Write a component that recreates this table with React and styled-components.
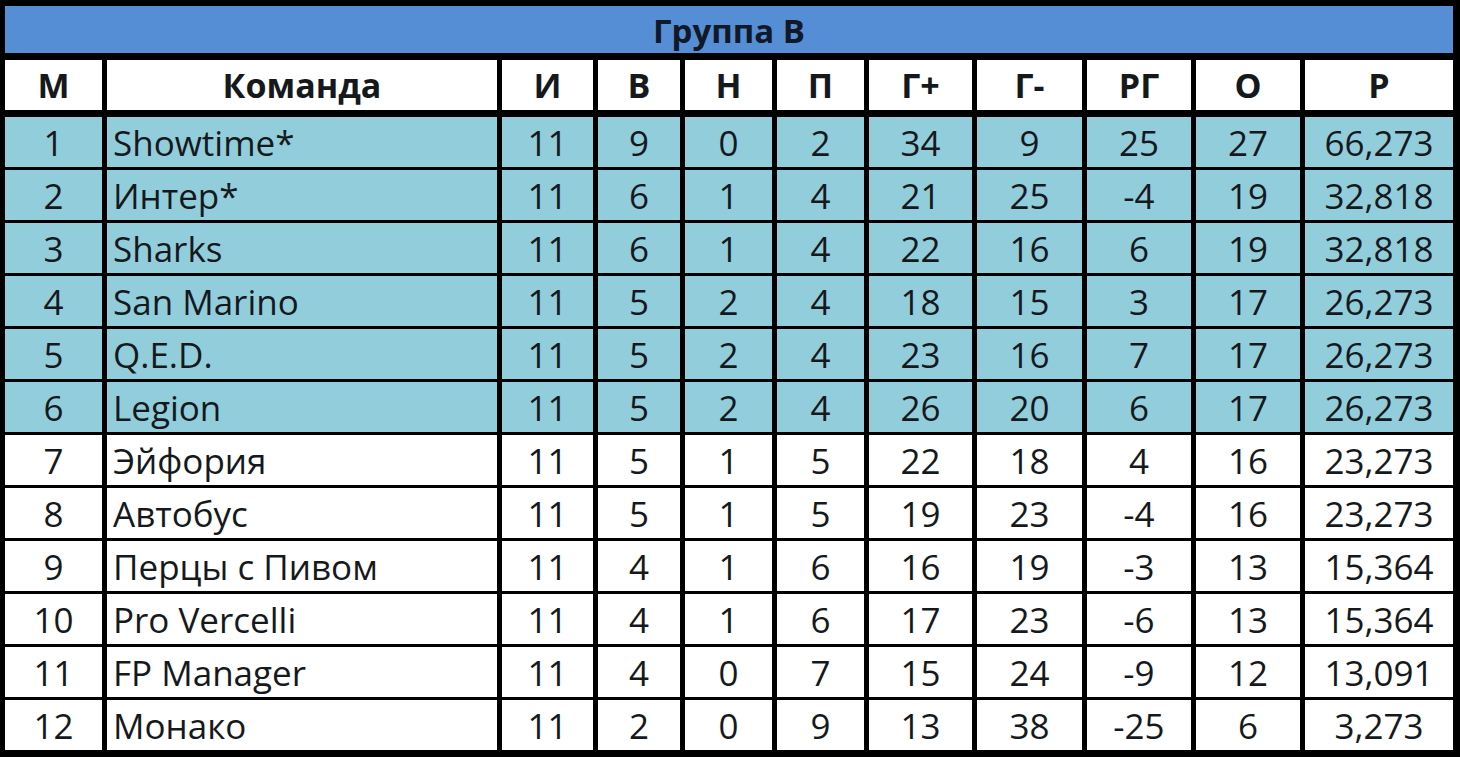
import styled, { createGlobalStyle } from "styled-components"

const GlobalStyle = createGlobalStyle`
    html, body {
        margin: 0;
        padding: 0;
        background: #ffffff;
    }
`

const columns = "97px 390px 91px 82px 87px 87px 103px 105px 104px 104px 148px"

const Board = styled.div`
    width: 1460px;
    height: 757px;
    box-sizing: border-box;
    background: #000;
    padding: 6px 7px 7px 5px;
    display: flex;
    flex-direction: column;
    font-family: "Open Sans", "Liberation Sans", sans-serif;
    color: #16191c;
`

const Title = styled.div`
    height: 47px;
    background: #558ed5;
    display: flex;
    align-items: center;
    justify-content: center;
    padding-top: 2px;
    box-sizing: border-box;
    font-size: 33px;
    font-weight: 700;
    color: #111827;
`

const Row = styled.div`
    display: grid;
    grid-template-columns: ${columns};
    column-gap: 5px;
    height: 50px;
    margin-top: ${props => props.$gap}px;
`

const Cell = styled.div`
    background: ${props => props.$bg};
    display: flex;
    align-items: center;
    justify-content: ${props => props.$left ? "flex-start" : "center"};
    padding-left: ${props => props.$left ? "6px" : "0"};
    font-size: ${props => props.$head ? "34px" : "35px"};
    font-weight: ${props => props.$head ? 700 : 400};
    white-space: nowrap;
    overflow: hidden;
`

const headers = ["М", "Команда", "И", "В", "Н", "П", "Г+", "Г-", "РГ", "О", "Р"]

const rows = [
    [1, "Showtime*", 11, 9, 0, 2, 34, 9, 25, 27, "66,273"],
    [2, "Интер*", 11, 6, 1, 4, 21, 25, -4, 19, "32,818"],
    [3, "Sharks", 11, 6, 1, 4, 22, 16, 6, 19, "32,818"],
    [4, "San Marino", 11, 5, 2, 4, 18, 15, 3, 17, "26,273"],
    [5, "Q.E.D.", 11, 5, 2, 4, 23, 16, 7, 17, "26,273"],
    [6, "Legion", 11, 5, 2, 4, 26, 20, 6, 17, "26,273"],
    [7, "Эйфория", 11, 5, 1, 5, 22, 18, 4, 16, "23,273"],
    [8, "Автобус", 11, 5, 1, 5, 19, 23, -4, 16, "23,273"],
    [9, "Перцы с Пивом", 11, 4, 1, 6, 16, 19, -3, 13, "15,364"],
    [10, "Pro Vercelli", 11, 4, 1, 6, 17, 23, -6, 13, "15,364"],
    [11, "FP Manager", 11, 4, 0, 7, 15, 24, -9, 12, "13,091"],
    [12, "Монако", 11, 2, 0, 9, 13, 38, -25, 6, "3,273"],
]

const App = () => {
    return (
        <>
            <GlobalStyle />
            <Board>
                <Title>Группа B</Title>
                <Row $gap={7}>
                    {headers.map(h => (
                        <Cell key={h} $head $bg="#ffffff">{h}</Cell>
                    ))}
                </Row>
                {rows.map((r, i) => (
                    <Row key={r[0]} $gap={i === 0 ? 7 : 3}>
                        {r.map((v, j) => (
                            <Cell key={j} $left={j === 1} $bg={r[0] <= 6 ? "#92cddc" : "#ffffff"}>
                                {v}
                            </Cell>
                        ))}
                    </Row>
                ))}
            </Board>
        </>
    )
}

export default App
